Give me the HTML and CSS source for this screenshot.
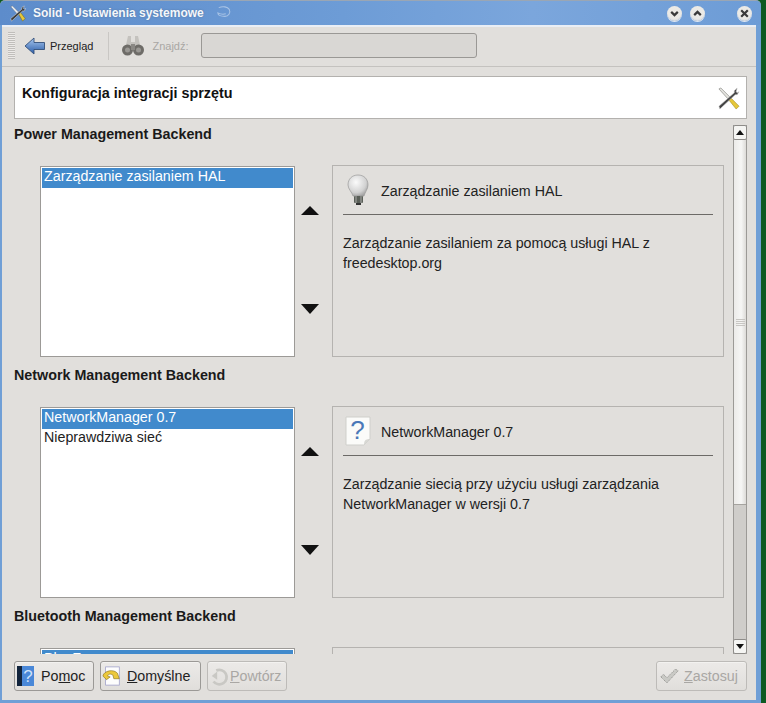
FILE: index.html
```html
<!DOCTYPE html>
<html lang="pl">
<head>
<meta charset="utf-8">
<title>Solid - Ustawienia systemowe</title>
<link rel="stylesheet" href="styles.css">
</head>
<body>
<div class="window">
  <header class="titlebar">
    <svg class="title-icon" viewBox="0 0 20 20"><path d="M2 2l2-1 9 9-2 2z" fill="#eef0f2" stroke="#5a6a80" stroke-width=".6"/><path d="M11 10l2-2 6 8-3 3z" fill="#e6c83a" stroke="#6a6020" stroke-width=".6"/><path d="M18 1l-3 2v2L2 16l1 3L16 7h2l2-3-2 1-1-1z" fill="#3c3c3c" stroke="#dfe6ee" stroke-width=".6"/></svg>
    <span class="title-text">Solid - Ustawienia systemowe</span>
    <svg class="title-swirl" viewBox="0 0 18 16"><path d="M3 3c5-2 10-1 12 2 2 4-1 8-5 8-4 0-8-1-8-4 2 1 6 2 9 1" fill="none" stroke="#a9c4e6" stroke-width="1.200"/></svg>
    <span class="title-spacer"></span>
    <div class="wm-buttons">
      <button class="wm-btn"><svg viewBox="0 0 10 10"><path d="M2 3.500l3 3 3-3" fill="none" stroke="#3a3a3a" stroke-width="2"/></svg></button>
      <button class="wm-btn"><svg viewBox="0 0 10 10"><path d="M2 6.500l3-3 3 3" fill="none" stroke="#3a3a3a" stroke-width="2"/></svg></button>
      <button class="wm-btn wm-close"><svg viewBox="0 0 10 10"><path d="M2 2l6 6M8 2l-6 6" fill="none" stroke="#3a3a3a" stroke-width="2"/></svg></button>
    </div>
  </header>

  <div class="client">
    <nav class="toolbar">
      <div class="grip"></div>
      <div class="tool-item">
        <svg class="back-icon" viewBox="0 0 22 18"><defs><linearGradient id="bk" x1="0" y1="0" x2="0" y2="1"><stop offset="0" stop-color="#a8c8f0"/><stop offset="1" stop-color="#2a5ca8"/></linearGradient></defs><path d="M1 9l9-8v4.500h10.500v7H10V17z" fill="url(#bk)" stroke="#33507a" stroke-width=".9"/></svg>
        <span class="tool-label">Przegląd</span>
      </div>
      <div class="tool-sep"></div>
      <svg class="bino-icon" viewBox="0 0 24 22"><path d="M7 1h3v6h4V1h3l2 9H5z" fill="#c4c2be"/><circle cx="6.500" cy="15" r="5.500" fill="#6e6c68"/><circle cx="17.500" cy="15" r="5.500" fill="#6e6c68"/><rect x="10" y="9" width="4" height="6" fill="#8a8884"/><circle cx="6.500" cy="15" r="2.500" fill="#9a9894"/><circle cx="17.500" cy="15" r="2.500" fill="#9a9894"/></svg>
      <span class="find-label">Znajdź:</span>
      <div class="find-input"></div>
    </nav>

    <section class="page-header">
      <h1 class="page-title">Konfiguracja integracji sprzętu</h1>
      <svg class="tools-icon" viewBox="0 0 24 24"><path d="M2 2l2-1 10 10-2 2z" fill="#e4e4e0" stroke="#8a8a86" stroke-width=".7"/><path d="M12 13l2-2 9 9-3 3z" fill="#e6c83a" stroke="#a08a20" stroke-width=".6"/><path d="M21 1l-3 3v2L2 20l1 3L19 8h2l2-3-2 1-1-1z" fill="#444" stroke="#c8c8c8" stroke-width=".6"/></svg>
    </section>

    <div class="scroll-area">
      <div class="scroll-content">
        <h2 class="group-title">Power Management Backend</h2>
        <div class="backend">
          <ul class="list">
            <li class="selected">Zarządzanie zasilaniem HAL</li>
          </ul>
          <div class="movers">
            <span class="arrow-up"></span>
            <span class="arrow-down"></span>
          </div>
          <div class="info">
            <div class="info-head">
              <svg class="info-icon" viewBox="0 0 24 32"><defs><radialGradient id="bulb" cx=".4" cy=".35" r=".7"><stop offset="0" stop-color="#fbfbfb"/><stop offset=".7" stop-color="#d2d2d2"/><stop offset="1" stop-color="#a2a2a2"/></radialGradient></defs><path d="M12 1c6 0 10 4 10 10 0 4-3 7-4 11H7C6 18 2 15 2 11 2 5 6 1 12 1z" fill="url(#bulb)" stroke="#999" stroke-width=".7"/><rect x="8" y="22" width="9" height="7" rx="1" fill="#5a5f58"/><rect x="10" y="29" width="5" height="2" fill="#333"/><path d="M10 22v7M15 22v7" stroke="#bbb" stroke-width=".8"/></svg>
              <span class="info-name">Zarządzanie zasilaniem HAL</span>
            </div>
            <p class="info-text">Zarządzanie zasilaniem za pomocą usługi HAL z<br>freedesktop.org</p>
          </div>
        </div>

        <h2 class="group-title">Network Management Backend</h2>
        <div class="backend">
          <ul class="list">
            <li class="selected">NetworkManager 0.7</li>
            <li>Nieprawdziwa sieć</li>
          </ul>
          <div class="movers">
            <span class="arrow-up"></span>
            <span class="arrow-down"></span>
          </div>
          <div class="info">
            <div class="info-head">
              <svg class="info-icon info-icon-page" viewBox="0 0 26 30"><path d="M1 1h24v22l-6 6H1z" fill="#fbfbf9" stroke="#cfcfcb" stroke-width="1"/><path d="M19 29c0-4 1-6 6-6z" fill="#d8d8d4"/><text x="12.500" y="23" class="help-mark">?</text></svg>
              <span class="info-name">NetworkManager 0.7</span>
            </div>
            <p class="info-text">Zarządzanie siecią przy użyciu usługi zarządzania<br>NetworkManager w wersji 0.7</p>
          </div>
        </div>

        <h2 class="group-title">Bluetooth Management Backend</h2>
        <div class="backend">
          <ul class="list">
            <li class="selected">BlueZ</li>
          </ul>
          <div class="movers"></div>
          <div class="info"></div>
        </div>
      </div>
      <div class="scrollbar">
        <div class="sb-btn"><span class="sb-up"></span></div>
        <div class="sb-thumb"><span class="sb-grip"></span></div>
        <div class="sb-trough"></div>
        <div class="sb-btn sb-btn-down"><span class="sb-down"></span></div>
      </div>
    </div>

    <footer class="footer">
      <button class="btn btn-help">
        <svg class="btn-icon" viewBox="0 0 17 22"><rect x="0" y="1" width="17" height="20" fill="#4a88d8"/><rect x="0" y="1" width="5" height="20" fill="#12243c"/><text x="11" y="17" class="help-book">?</text></svg>
        <span>Po<u>m</u>oc</span>
      </button>
      <button class="btn btn-defaults">
        <svg class="btn-icon" viewBox="0 0 22 22"><rect x="4" y="1" width="15" height="20" fill="#fdfdfd" stroke="#9a9ac8" stroke-width=".8"/><path d="M1 11c1-6 12-8 16-3l2 6h-6l-1-4c-3-2-5-1-6 1l3 1-4 3z" fill="#ecc83c" stroke="#8a7420" stroke-width=".7"/></svg>
        <span><u>D</u>omyślne</span>
      </button>
      <button class="btn btn-disabled btn-reset">
        <svg class="btn-icon" viewBox="0 0 22 22"><path d="M8 5a8 8 0 1 1-3 12" fill="none" stroke="#c9c8c4" stroke-width="3"/><path d="M3 11l6-5v9z" fill="#c9c8c4"/></svg>
        <span><u>P</u>owtórz</span>
      </button>
      <span class="footer-spacer"></span>
      <button class="btn btn-disabled btn-apply">
        <svg class="btn-icon" viewBox="0 0 22 18"><path d="M1 10l3-3 4 4L18 1l3 2L8 17z" fill="#c9c9c5" stroke="#8f8f8b" stroke-width="1" stroke-dasharray="1.500 1"/></svg>
        <span><u>Z</u>astosuj</span>
      </button>
    </footer>
  </div>
</div>
</body>
</html>
```
FILE: styles.css
```css
* { box-sizing: border-box; }
html, body { margin: 0; height: 100%; }
body {
  background: #0d5a22;
  font-family: "Liberation Sans", Arial, sans-serif;
  font-size: 14.25px;
  color: #222;
  overflow: hidden;
}
.window {
  width: 761px;
  height: 703px;
  display: flex;
  flex-direction: column;
  background: #709fd6;
  border-radius: 5px 5px 0 0;
  padding: 0 5px 3px 2px;
  border-top: 1px solid #9aa6b4;
}
.titlebar {
  height: 24px;
  flex: none;
  display: flex;
  align-items: center;
  background: linear-gradient(90deg, #5d8ccb 0%, #6d9cd6 45%, #7ba6dc 70%, #6d9cd6 100%);
  margin: 0 -5px 0 -2px;
  padding: 0 0 0 9px;
  border-radius: 5px 5px 0 0;
}
.title-icon { width: 17px; height: 17px; flex: none; }
.title-text {
  margin-left: 7px;
  margin-top: -1px;
  font-size: 12px;
  font-weight: bold;
  color: #f4f7fb;
  text-shadow: 0 0 2px #54759f;
}
.title-swirl { width: 16px; height: 14px; margin-left: 12px; margin-top: -2px; }
.title-spacer { flex: 1; }
.wm-buttons { display: flex; align-items: center; gap: 8px; margin-right: 9px; }
.wm-btn {
  width: 15px;
  height: 15px;
  padding: 2px;
  border: none;
  border-radius: 50%;
  background: radial-gradient(circle at 50% 40%, #ebeae6 55%, #c0c8d6 100%);
  box-shadow: 0 1px 0 #dfe7f2;
  display: flex;
}
.wm-btn svg { width: 11px; height: 11px; }
.wm-close { margin-left: 24px; }
.client {
  flex: 1;
  min-height: 0;
  display: flex;
  flex-direction: column;
  background: #e1dfdc;
  border-top: 2px solid #e9eef5;
}
.toolbar {
  height: 40px;
  flex: none;
  display: flex;
  align-items: center;
  padding: 0 0 2px 6px;
  border-bottom: 1px solid #c4c2bf;
}
.grip {
  width: 7px;
  height: 27px;
  background: repeating-linear-gradient(180deg, #c0bebb 0 1px, #eceae8 1px 2px);
  flex: none;
}
.tool-item { display: flex; align-items: center; margin-left: 9px; }
.back-icon { width: 22px; height: 18px; flex: none; }
.tool-label { font-size: 11px; margin-left: 4px; color: #222; }
.tool-sep { width: 1px; height: 28px; background: #c9c7c4; margin-left: 15px; }
.bino-icon { width: 24px; height: 22px; margin-left: 12px; flex: none; }
.find-label { font-size: 11px; color: #a9a7a4; margin-left: 7px; }
.find-input {
  width: 276px;
  height: 25px;
  margin-left: 12px;
  background: #d9d7d4;
  border: 1px solid #9a9895;
  border-radius: 3px;
}
.page-header {
  flex: none;
  height: 43px;
  margin: 9px 9px 0 12px;
  background: #fff;
  border: 1px solid #b3b1ae;
  display: flex;
  justify-content: space-between;
  padding: 7px 6px 0 7px;
}
.page-title { margin: 0; font-size: 14.35px; font-weight: bold; color: #111; line-height: 18px; }
.tools-icon { width: 23px; height: 23px; margin-top: 3px; }
.scroll-area {
  flex: 1;
  min-height: 0;
  display: flex;
  margin: 6px 9px 0 12px;
  overflow: hidden;
}
.scroll-content { flex: 1; min-width: 0; overflow: hidden; }
.group-title {
  margin: 0;
  height: 18px;
  font-size: 14.3px;
  font-weight: bold;
  line-height: 18px;
  color: #1a1a1a;
}
.backend {
  display: flex;
  height: 192px;
  margin: 22px 0 9px 26px;
}
.list {
  list-style: none;
  margin: 1px 0 0;
  padding: 1px;
  width: 255px;
  height: 191px;
  background: #fff;
  border: 1px solid #9c9a97;
  flex: none;
}
.list li { height: 20px; line-height: 17px; padding-left: 2px; color: #222; }
.list .selected { background: #418acc; color: #fff; }
.movers {
  width: 37px;
  flex: none;
  display: flex;
  flex-direction: column;
  align-items: flex-start;
  padding: 41px 0 0 6px;
  gap: 89px;
}
.arrow-up, .arrow-down {
  width: 0;
  height: 0;
  border-left: 9px solid transparent;
  border-right: 9px solid transparent;
}
.arrow-up { border-bottom: 9px solid #111; }
.arrow-down { border-top: 10px solid #111; }
.info {
  width: 392px;
  height: 192px;
  flex: none;
  border: 1px solid #b5b3b0;
  padding: 0 10px;
}
.info-head {
  height: 49px;
  display: flex;
  align-items: center;
  border-bottom: 1px solid #6c6a67;
}
.info-icon { width: 30px; height: 32px; flex: none; }
.info-icon-page { width: 26px; height: 30px; margin: 0 2px 0 2px; }
.info-name { margin-left: 8px; padding-top: 1px; }
.info-text { margin: 18px 0 0; line-height: 20px; }
.help-mark { font-size: 26px; fill: #4a78b8; text-anchor: middle; font-family: "Liberation Sans", sans-serif; }
.help-book { font-size: 17px; fill: #cfe2fa; text-anchor: middle; font-family: "Liberation Sans", sans-serif; }
.scrollbar {
  width: 14px;
  flex: none;
  margin-left: 3px;
  display: flex;
  flex-direction: column;
  border-left: 1px solid #9c9a97;
  border-right: 1px solid #9c9a97;
}
.sb-btn {
  height: 15px;
  flex: none;
  background: #f5f5f3;
  border: 1px solid #8e8c89;
  margin: 0 -1px;
  border-radius: 2px;
  display: flex;
  align-items: center;
  justify-content: center;
}
.sb-up, .sb-down { width: 0; height: 0; border-left: 4px solid transparent; border-right: 4px solid transparent; }
.sb-up { border-bottom: 5px solid #111; }
.sb-down { border-top: 5px solid #111; }
.sb-thumb {
  flex: none;
  height: 365px;
  background: linear-gradient(90deg, #ecebe9, #f6f6f5 60%, #dddbd8);
  border-bottom: 1px solid #a5a39f;
  display: flex;
  align-items: center;
  justify-content: center;
}
.sb-grip { width: 9px; height: 7px; background: repeating-linear-gradient(180deg, #c8c6c3 0 1px, transparent 1px 2px); }
.sb-trough { flex: 1; background: #cfcdca; }
.footer {
  flex: none;
  height: 46px;
  display: flex;
  align-items: flex-start;
  gap: 6px;
  padding: 7px 9px 0 12px;
}
.footer-spacer { flex: 1; }
.btn {
  height: 30px;
  display: flex;
  align-items: center;
  border: 1px solid #9b9996;
  border-radius: 3px;
  background: linear-gradient(180deg, #eceae8, #e0dedb);
  font: 14.25px "Liberation Sans", Arial, sans-serif;
  color: #222;
  padding: 0;
  box-shadow: 0 1px 0 #f3f2f0 inset;
}
.btn-icon { height: 22px; flex: none; }
.btn-help { width: 80px; padding-left: 2px; }
.btn-help .btn-icon { width: 17px; margin-right: 7px; }
.btn-defaults { width: 101px; padding-left: 1px; }
.btn-defaults .btn-icon { width: 20px; margin-right: 5px; }
.btn-reset { width: 80px; padding-left: 1px; }
.btn-reset .btn-icon { width: 20px; margin-right: 1px; }
.btn-apply { width: 91px; padding-left: 3px; }
.btn-apply .btn-icon { width: 19px; margin-right: 5px; }
.btn-disabled { color: #a9a7a4; border-color: #bdbbb8; }
```
